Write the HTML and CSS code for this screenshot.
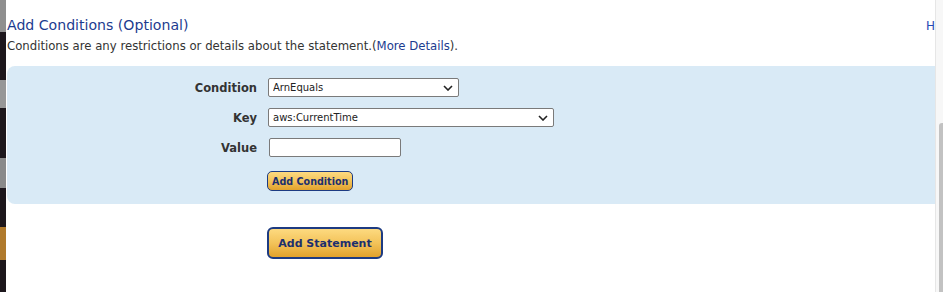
FILE: index.html
```html
<!DOCTYPE html>
<html>
<head>
  <title>Add Conditions</title>
  <link rel="stylesheet" href="styles.css">
</head>
<body>

  <div class="screen">
    <div class="desk-strip">
      <div class="desk-block b1"></div>
      <div class="desk-block b2"></div>
      <div class="desk-block b3"></div>
      <div class="desk-block b4"></div>
    </div>

    <div class="page">
      <div class="section-head">
        <h2 class="section-title">Add Conditions (Optional)</h2>
        <a class="help-link" href="#">H</a>
      </div>
      <p class="section-desc">Conditions are any restrictions or details about the statement.(<a href="#">More Details</a>).</p>

      <div class="cond-panel">
        <form class="cond-form">
          <label class="cond-label" for="condition">Condition</label>
          <div class="cond-field">
            <select id="condition" class="sel sel-condition">
              <option>ArnEquals</option>
            </select>
          </div>

          <label class="cond-label" for="key">Key</label>
          <div class="cond-field">
            <select id="key" class="sel sel-key">
              <option>aws:CurrentTime</option>
            </select>
          </div>

          <label class="cond-label" for="value">Value</label>
          <div class="cond-field">
            <input type="text" id="value" class="txt">
          </div>

          <span></span>
          <div class="cond-field">
            <button type="button" class="gold-btn small-btn">Add Condition</button>
          </div>
        </form>
      </div>

      <div class="statement-row">
        <button type="button" class="gold-btn big-btn">Add Statement</button>
      </div>
    </div>

    <div class="scrollbar">
      <div class="scroll-thumb"></div>
    </div>
  </div>

</body>
</html>
```

FILE: styles.css
```css
/* Policy generator - conditions block */
html, body {
  margin: 0;
  height: 100%;
  background: #fff;
}
body {
  font-family: "DejaVu Sans", Verdana, sans-serif;
  color: #333;
  overflow: hidden;
}
.screen {
  display: flex;
  height: 292px;
}

/* bit of the window behind */
.desk-strip {
  width: 6px;
  flex: none;
  background: #1d171c;
  display: flex;
  flex-direction: column;
}
.desk-block {
  background: #8f8f8f;
  width: 6px;
}
.b1 { height: 32px; }
.b2 { height: 28px; margin-top: 48px; background: #979797; }
.b3 { height: 30px; margin-top: 50px; background: #8a8a8a; }
.b4 { height: 33px; margin-top: 39px; background: #b07a2c; }

.page {
  flex: 1;
  padding-left: 1px;
  min-width: 0;
}

.section-head {
  display: flex;
  justify-content: space-between;
  align-items: baseline;
  margin-top: 15px;
  height: 20px;
}
.section-title {
  margin: 0;
  font-size: 14.1px;
  font-weight: normal;
  color: #1c3b8f;
  line-height: 20px;
}
.help-link {
  font-size: 12px;
  color: #2549b5;
  text-decoration: none;
  white-space: nowrap;
}
.section-desc {
  margin: 3px 0 0 0;
  font-size: 11.7px;
  line-height: 16px;
  color: #333;
}
.section-desc a {
  color: #1c3b8f;
  text-decoration: none;
}

.cond-panel {
  margin-top: 12px;
  background: #d9eaf6;
  border-radius: 8px 0 0 8px;
  padding: 12px 0 13px 0;
}
.cond-form {
  display: grid;
  grid-template-columns: 250px auto;
  column-gap: 11px;
  row-gap: 11px;
  align-items: center;
  margin: 0;
}
.cond-label {
  text-align: right;
  font-weight: bold;
  font-size: 11.5px;
  color: #333;
}
.cond-field {
  display: flex;
}

.sel {
  appearance: none;
  -webkit-appearance: none;
  height: 19px;
  border: 1px solid #7a7a7a;
  border-radius: 2px;
  background: #fff url("data:image/svg+xml;utf8,<svg xmlns='http://www.w3.org/2000/svg' width='10' height='6' viewBox='0 0 10 6'><path d='M1 1l4 4 4-4' fill='none' stroke='%23222' stroke-width='1.6'/></svg>") no-repeat right 5px center;
  font-family: "DejaVu Sans", sans-serif;
  font-size: 10px;
  color: #222;
  padding: 0 0 0 4px;
  margin: 0;
}
.sel-condition { width: 191px; }
.sel-key { width: 286px; }

.txt {
  width: 132px;
  height: 19px;
  box-sizing: border-box;
  border: 1px solid #7a7a7a;
  border-radius: 2px;
  background: #fff;
  margin: 0 0 0 1px;
  padding: 0;
}

.gold-btn {
  font-family: "DejaVu Sans", sans-serif;
  font-weight: bold;
  color: #1c2f6e;
  background: linear-gradient(#fdda80, #f3c35a 50%, #e2a22c);
  border: 1px solid #1d3b82;
  cursor: pointer;
  margin: 0;
  white-space: nowrap;
}
.small-btn {
  height: 20px;
  padding: 0 4px;
  font-size: 9.6px;
  border-radius: 5px;
  margin-left: -1px;
  margin-top: 3px;
}

.statement-row {
  margin-top: 23px;
  padding-left: 260px;
}
.big-btn {
  height: 32px;
  width: 116px;
  padding: 0;
  border: 2px solid #1d3b82;
  border-radius: 6px;
  font-size: 11px;
}

/* fake page scrollbar */
.scrollbar {
  width: 7px;
  flex: none;
  background: #f7f7f7;
  border-left: 1px solid #e6e6e6;
  display: flex;
  flex-direction: column;
  justify-content: flex-end;
}
.scroll-thumb {
  height: 169px;
  margin-left: 3px;
  background: #c2c2c2;
  border-radius: 3px 0 0 0;
}
```
